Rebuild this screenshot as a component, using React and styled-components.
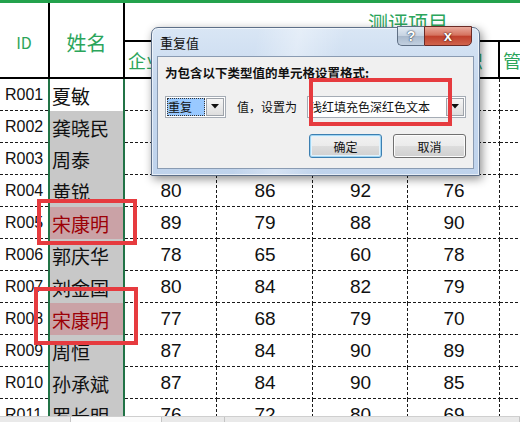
import React from 'react';
import styled, {createGlobalStyle} from 'styled-components';

const GlobalStyle = createGlobalStyle`
	html, body {
		margin: 0;
		padding: 0;
		background: #fff;
		overflow: hidden;
	}
`;

const GREEN = '#23a24d';
const GREEN_TEXT = '#2ba55b';
const SELECT_GREEN = '#217346';
const RED = '#e63b3f';

const dashX = 'repeating-linear-gradient(to right, #1a1a1a 0 3px, transparent 3px 5px)';
const dashY = 'repeating-linear-gradient(to bottom, #1a1a1a 0 3px, transparent 3px 5px)';

const Stage = styled.div`
	position: relative;
	width: 520px;
	height: 422px;
	overflow: hidden;
	display: flex;
	flex-direction: column;
	background: #fff;
	font-family: "Liberation Sans", "Noto Sans CJK SC", sans-serif;
`;

const TopLine = styled.div`
	height: 3px;
	flex: none;
	background: ${GREEN};
`;

const Header = styled.div`
	flex: none;
	display: grid;
	grid-template-columns: 50px 75px 1fr;
	height: 76px;
	box-sizing: border-box;
	border-bottom: 2px solid #000;
`;

const HeadCell = styled.div`
	border-right: 2px solid #000;
	display: flex;
	align-items: center;
	justify-content: center;
	padding-top: 4px;
	color: ${GREEN_TEXT};
	font-family: "Noto Sans CJK SC", sans-serif;
	font-size: ${(props) => props.size}px;
`;

const Group = styled.div`
	display: flex;
	flex-direction: column;
	min-width: 0;
`;

const GroupTitle = styled.div`
	border-bottom: 2px solid #000;
	display: flex;
	align-items: center;
	padding: 2px 0 0 243px;
	height: 35px;
	color: ${GREEN_TEXT};
	font-family: "Noto Sans CJK SC", sans-serif;
	font-size: 20px;
	white-space: nowrap;
`;

const SubRow = styled.div`
	flex: 1;
	display: grid;
	grid-template-columns: 92px 96px 95px 92px 1fr;
`;

const SubCell = styled.div`
	border-right: ${(props) => (props.last ? 'none' : '2px solid #000')};
	display: flex;
	align-items: center;
	padding-left: 3px;
	overflow: hidden;
	white-space: nowrap;
	color: ${GREEN_TEXT};
	font-family: "Noto Sans CJK SC", sans-serif;
	font-size: 18px;
`;

const Body = styled.div`
	flex: 1;
	overflow: hidden;
`;

const Row = styled.div`
	display: grid;
	grid-template-columns: 48px 77px 92px 96px 95px 92px 1fr;
	height: 32px;
`;

const IdCell = styled.div`
	display: flex;
	align-items: center;
	padding-left: 5px;
	font-size: 16px;
	color: #111;
	background-image: ${dashX};
	background-size: 100% 1px;
	background-position: left bottom;
	background-repeat: no-repeat;
`;

const NameCell = styled.div`
	display: flex;
	align-items: center;
	padding-left: 2px;
	border-left: 2px solid ${SELECT_GREEN};
	border-right: 2px solid ${SELECT_GREEN};
	background: ${(props) => props.fill};
	color: ${(props) => props.ink};
	font-family: "Noto Sans CJK SC", sans-serif;
	font-size: 19px;
	white-space: nowrap;
	overflow: hidden;
`;

const ScoreCell = styled.div`
	display: flex;
	align-items: center;
	justify-content: center;
	font-size: 19px;
	color: #111;
	background-image: ${dashX}, ${(props) => (props.edge ? 'none' : dashY)};
	background-size: 100% 1px, 1px 100%;
	background-position: left bottom, right top;
	background-repeat: no-repeat;
`;

const BottomBar = styled.div`
	flex: none;
	height: 5px;
	display: flex;
	background: #e9e9e9;
	border-top: 1px solid #cfcfcf;
`;

const BarPart = styled.div`
	width: ${(props) => props.w}px;
	flex: ${(props) => (props.w ? 'none' : 1)};
	background: ${(props) => (props.light ? '#fbfbfb' : 'transparent')};
	border-right: 1px solid #c4c4c4;
`;

const Dialog = styled.div`
	position: absolute;
	left: 151px;
	top: 27px;
	width: 329px;
	height: 149px;
	box-sizing: border-box;
	display: flex;
	flex-direction: column;
	padding: 0 5px 6px;
	border: 1px solid #5d6f88;
	border-radius: 7px 7px 0 0;
	background:
		linear-gradient(100deg, transparent 30%, rgba(255,255,255,0.35) 42%, transparent 55%),
		linear-gradient(to bottom, #d9e6f5 0%, #c6d8ee 40%, #bfd3ec 100%);
	box-shadow: 2px 3px 10px rgba(0, 0, 0, 0.45), inset 0 0 0 1px rgba(255,255,255,0.6);
	font-family: "Noto Sans CJK SC", sans-serif;
`;

const TitleBar = styled.div`
	position: relative;
	height: 28px;
	display: flex;
	align-items: center;
	padding-left: 3px;
	font-size: 13px;
	color: #111;
`;

const TitleButtons = styled.div`
	position: absolute;
	top: -2px;
	right: 2px;
	display: flex;
	height: 20px;
`;

const HelpButton = styled.div`
	width: 26px;
	display: flex;
	align-items: center;
	justify-content: center;
	border: 1px solid #5f6f84;
	border-right: none;
	border-radius: 0 0 0 5px;
	background: linear-gradient(to bottom, #e3ebf4 0%, #c5d2e1 50%, #a9b9cc 51%, #c2d0e0 100%);
	color: #fff;
	font-family: "Liberation Sans", sans-serif;
	font-weight: bold;
	font-size: 14px;
	text-shadow: 0 0 2px #2c3a4c, 0 0 1px #2c3a4c;
`;

const CloseButton = styled.div`
	width: 46px;
	display: flex;
	align-items: center;
	justify-content: center;
	border: 1px solid #6b2b26;
	border-radius: 0 0 5px 0;
	background: linear-gradient(to bottom, #e9a99c 0%, #d5735f 45%, #c0402c 52%, #d0644c 100%);
	color: #fff;
	font-family: "Liberation Sans", sans-serif;
	font-weight: bold;
	font-size: 15px;
	line-height: 1;
	padding-bottom: 2px;
	text-shadow: 0 0 2px #4a1a14, 0 0 1px #4a1a14;
`;

const Panel = styled.div`
	flex: 1;
	display: flex;
	flex-direction: column;
	padding: 8px 7px;
	background: #f0f0f0;
	border: 1px solid #8a9bb2;
`;

const Prompt = styled.div`
	line-height: 16px;
	font-size: 12.5px;
	font-weight: bold;
	color: #111;
	white-space: nowrap;
`;

const FieldRow = styled.div`
	display: flex;
	align-items: center;
	height: 23px;
	margin-top: 14px;
	font-size: 12px;
	color: #111;
`;

const Combo = styled.div`
	box-sizing: border-box;
	width: ${(props) => props.w}px;
	height: 22px;
	display: flex;
	align-items: stretch;
	padding: 1px;
	background: #fff;
	border: 1px solid #a5acb5;
	margin-right: ${(props) => props.gap || 0}px;
`;

const ComboText = styled.div`
	flex: 1;
	display: flex;
	align-items: center;
	padding-left: 1px;
	white-space: nowrap;
	overflow: hidden;
	background: ${(props) => (props.picked ? '#99c9ff' : 'transparent')};
	outline: ${(props) => (props.picked ? '1px dotted #333' : 'none')};
	outline-offset: -1px;
`;

const ComboArrow = styled.div`
	width: 16px;
	display: flex;
	align-items: center;
	justify-content: center;
	margin-left: 1px;
	border: 1px solid #9ea3aa;
	background: linear-gradient(to bottom, #f6f6f6, #dedede);
`;

const Caption = styled.span`
	margin-right: 10px;
	white-space: nowrap;
`;

const ButtonRow = styled.div`
	display: flex;
	justify-content: flex-end;
	gap: 11px;
	margin-top: 16px;
`;

const Button = styled.div`
	box-sizing: border-box;
	width: 73px;
	height: 24px;
	display: flex;
	align-items: center;
	justify-content: center;
	border-radius: 3px;
	font-size: 12px;
	color: #111;
	border: 1px solid ${(props) => (props.focused ? '#3c7fb1' : '#707070')};
	background: linear-gradient(to bottom, #f2f2f2 0%, #ebebeb 50%, #dddddd 51%, #cfcfcf 100%);
	box-shadow: ${(props) => (props.focused ? 'inset 0 0 0 1px #9fd5f3, inset 0 0 0 2px #e3f2fb' : 'inset 0 0 0 1px #fcfcfc')};
`;

const Mark = styled.div`
	position: absolute;
	left: ${(props) => props.x}px;
	top: ${(props) => props.y}px;
	width: ${(props) => props.w}px;
	height: ${(props) => props.h}px;
	box-sizing: border-box;
	border: 4px solid ${RED};
	pointer-events: none;
`;

function DownArrow() {
	return (
		<svg width="8" height="5" viewBox="0 0 8 5">
			<path d="M0 0 H8 L4 4.5 Z" fill="#111" />
		</svg>
	);
}

const rows = [
	{id: 'R001', name: '夏敏', scores: [85, 90, 78, 88], active: true},
	{id: 'R002', name: '龚晓民', scores: [82, 76, 85, 80]},
	{id: 'R003', name: '周泰', scores: [79, 88, 84, 91]},
	{id: 'R004', name: '黄锐', scores: [80, 86, 92, 76]},
	{id: 'R005', name: '宋康明', scores: [89, 79, 88, 90], dup: true},
	{id: 'R006', name: '郭庆华', scores: [78, 65, 60, 78]},
	{id: 'R007', name: '刘金国', scores: [80, 84, 82, 79]},
	{id: 'R008', name: '宋康明', scores: [77, 68, 79, 70], dup: true},
	{id: 'R009', name: '周恒', scores: [87, 84, 90, 89]},
	{id: 'R010', name: '孙承斌', scores: [87, 84, 90, 85]},
	{id: 'R011', name: '罗长明', scores: [76, 72, 80, 69]},
];

const subjects = ['企业文化', '团队协作', '工作态度', '专业知识', '管理能力'];

function fillFor(row) {
	if (row.active) return '#fff';
	if (row.dup) return '#caa2a6';
	return '#c8c8c8';
}

export default function App() {
	return (
		<Stage>
			<GlobalStyle />
			<TopLine />
			<Header>
				<HeadCell size={16}>ID</HeadCell>
				<HeadCell size={20}>姓名</HeadCell>
				<Group>
					<GroupTitle>测评项目</GroupTitle>
					<SubRow>
						{subjects.map((s, i) => (
							<SubCell key={s} last={i === subjects.length - 1}>{s}</SubCell>
						))}
					</SubRow>
				</Group>
			</Header>
			<Body>
				{rows.map((row) => (
					<Row key={row.id}>
						<IdCell>{row.id}</IdCell>
						<NameCell fill={fillFor(row)} ink={row.dup ? '#9c0006' : '#111'}>{row.name}</NameCell>
						{row.scores.map((v, i) => (
							<ScoreCell key={i}>{v}</ScoreCell>
						))}
						<ScoreCell edge />
					</Row>
				))}
			</Body>
			<BottomBar>
				<BarPart w={70} />
				<BarPart w={90} light />
				<BarPart w={62} />
				<BarPart />
			</BottomBar>

			<Dialog>
				<TitleBar>
					重复值
					<TitleButtons>
						<HelpButton>?</HelpButton>
						<CloseButton>x</CloseButton>
					</TitleButtons>
				</TitleBar>
				<Panel>
					<Prompt>为包含以下类型值的单元格设置格式:</Prompt>
					<FieldRow>
						<Combo w={61} gap={11}>
							<ComboText picked>重复</ComboText>
							<ComboArrow><DownArrow /></ComboArrow>
						</Combo>
						<Caption>值，设置为</Caption>
						<Combo w={159}>
							<ComboText>浅红填充色深红色文本</ComboText>
							<ComboArrow><DownArrow /></ComboArrow>
						</Combo>
					</FieldRow>
					<ButtonRow>
						<Button focused>确定</Button>
						<Button>取消</Button>
					</ButtonRow>
				</Panel>
			</Dialog>

			<Mark x={309} y={78} w={143} h={48} />
			<Mark x={37} y={199} w={100} h={46} />
			<Mark x={34} y={287} w={104} h={58} />
		</Stage>
	);
}
